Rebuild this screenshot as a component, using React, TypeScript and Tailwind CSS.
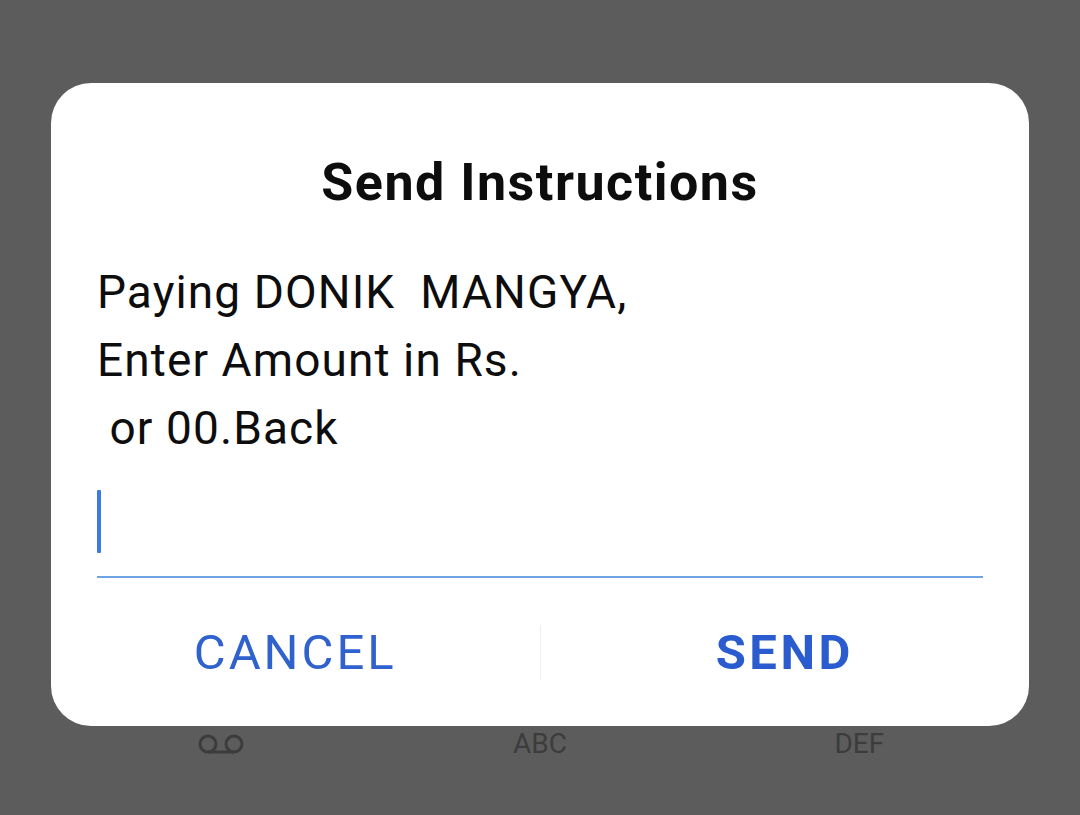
import React from 'react';

const Voicemail: React.FC = () => (
  <svg width="46" height="20" viewBox="0 0 46 20" fill="none" stroke="#3c3c3c" strokeWidth="3">
    <circle cx="10" cy="10" r="8" />
    <circle cx="36" cy="10" r="8" />
    <line x1="10" y1="18" x2="36" y2="18" />
  </svg>
);

export default function App() {
  return (
    <div className="w-[1080px] h-[815px] bg-[#5c5c5c] pt-[83px] px-[51px] font-['Roboto','Liberation_Sans',sans-serif] overflow-hidden">
      <div className="h-[643px] bg-white rounded-[40px] flex flex-col">
        <h1 className="pt-[70px] text-center text-[52px] leading-[60px] tracking-[1.5px] font-bold text-[#0d0d0d]">
          Send Instructions
        </h1>
        <div className="mt-[45px] px-[46px] text-[46px] leading-[68px] tracking-[1.1px] text-[#0d0d0d] whitespace-pre">
          <div>Paying DONIK  MANGYA,</div>
          <div>Enter Amount in Rs.</div>
          <div> or 00.Back</div>
        </div>
        <div className="mx-[46px] pt-[28px] pb-[23px] border-b-2 border-[#6ea4e6]">
          <div className="w-[4px] h-[63px] bg-[#3b7be3] rounded-[1px]" />
        </div>
        <div className="mt-[24px] h-[100px] flex items-center">
          <button className="flex-1 text-center text-[49px] leading-[49px] tracking-[3px] text-[#2f62cc]">CANCEL</button>
          <div className="w-px h-[55px] bg-[#efefef]" />
          <button className="flex-1 text-center text-[49px] leading-[49px] tracking-[3.5px] font-bold text-[#2b5ccf]">SEND</button>
        </div>
      </div>
      <div className="w-[958px] mx-auto grid grid-cols-3 text-[28px] leading-[36px] text-[#3c3c3c]">
        <div className="flex justify-center items-center h-[36px]"><Voicemail /></div>
        <div className="text-center">ABC</div>
        <div className="text-center">DEF</div>
      </div>
    </div>
  );
}
